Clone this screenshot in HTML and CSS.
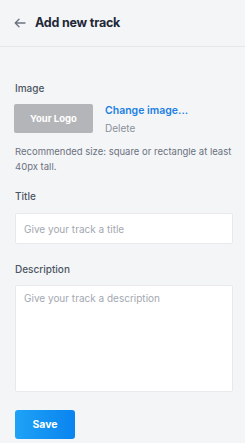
FILE: index.html
```html
<!DOCTYPE html>
<html>
<head>
<meta charset="utf-8">
<link rel="stylesheet" href="styles.css">
</head>
<body>
<header class="header">
  <svg class="back" width="12" height="10" viewBox="0 0 12 10" fill="none" stroke="#6b7280" stroke-width="1.3" stroke-linecap="round" stroke-linejoin="round"><path d="M11 5H1.2M5 1.2L1.2 5L5 8.8"/></svg>
  <h1 class="title">Add new track</h1>
</header>
<main class="form">
  <div class="field">
    <div class="label">Image</div>
    <div class="image-row">
      <div class="logo">Your Logo</div>
      <div class="image-actions">
        <a class="change">Change image...</a>
        <span class="delete">Delete</span>
      </div>
    </div>
    <p class="hint">Recommended size: square or rectangle at least 40px tall.</p>
  </div>
  <div class="field">
    <div class="label">Title</div>
    <input class="input" placeholder="Give your track a title">
  </div>
  <div class="field">
    <div class="label">Description</div>
    <textarea class="textarea" placeholder="Give your track a description"></textarea>
  </div>
  <button class="save">Save</button>
</main>
</body>
</html>
```
FILE: styles.css
```css
* { box-sizing: border-box; }
html, body { margin: 0; padding: 0; }
body {
  background: #f4f5f7;
  font-family: Inter, "Noto Sans", sans-serif;
  color: #374151;
  width: 245px;
  height: 443px;
  overflow: hidden;
}
.header {
  display: flex;
  align-items: center;
  height: 47px;
  padding: 0 0 1px 14px;
  border-bottom: 1px solid #e5e7ea;
}
.back { margin-right: 9px; flex: none; }
.title {
  margin: 0;
  font-size: 12.5px;
  font-weight: 700;
  color: #1f2937;
  letter-spacing: -0.2px;
}
.form {
  padding: 34px 12px 0 15px;
  display: flex;
  flex-direction: column;
}
.field { display: flex; flex-direction: column; }
.label {
  font-size: 10px;
  font-weight: 500;
  color: #4b5563;
  line-height: 14px;
}
.image-row {
  display: flex;
  margin-top: 9px;
}
.logo {
  width: 79px;
  height: 29px;
  background: #b4b5b8;
  border-radius: 2px;
  color: #fff;
  font-size: 9.5px;
  font-weight: 700;
  display: flex;
  align-items: center;
  justify-content: center;
  margin-left: -1px;
}
.image-actions {
  display: flex;
  flex-direction: column;
  margin-left: 12px;
}
.change {
  color: #1b7fe3;
  font-size: 10.5px;
  font-weight: 600;
  line-height: 14px;
}
.delete {
  color: #8b9099;
  font-size: 10px;
  line-height: 14px;
  margin-top: 3px;
}
.hint {
  margin: 9px 0 0;
  font-size: 9.5px;
  line-height: 15px;
  color: #6b7280;
}
.field:nth-child(2) { margin-top: 15px; }
.field:nth-child(3) { margin-top: 18px; }
.input, .textarea {
  margin-top: 10px;
  width: 100%;
  border: 1px solid #e8e9ec;
  border-radius: 2px;
  background: #fff;
  font-family: inherit;
  font-size: 10px;
  color: #374151;
  padding: 0 8px;
  outline: none;
}
.input { height: 31px; }
.textarea {
  height: 107px;
  padding-top: 6px;
  resize: none;
  margin-top: 9px;
}
.input::placeholder, .textarea::placeholder { color: #a3a8b0; }
.save {
  margin-top: 18px;
  width: 60px;
  height: 29px;
  border: none;
  border-radius: 3px;
  background: linear-gradient(90deg, #1ea2f6, #0a84ef);
  color: #fff;
  font-family: inherit;
  font-weight: 700;
  font-size: 10.5px;
  padding: 0;
}
```
